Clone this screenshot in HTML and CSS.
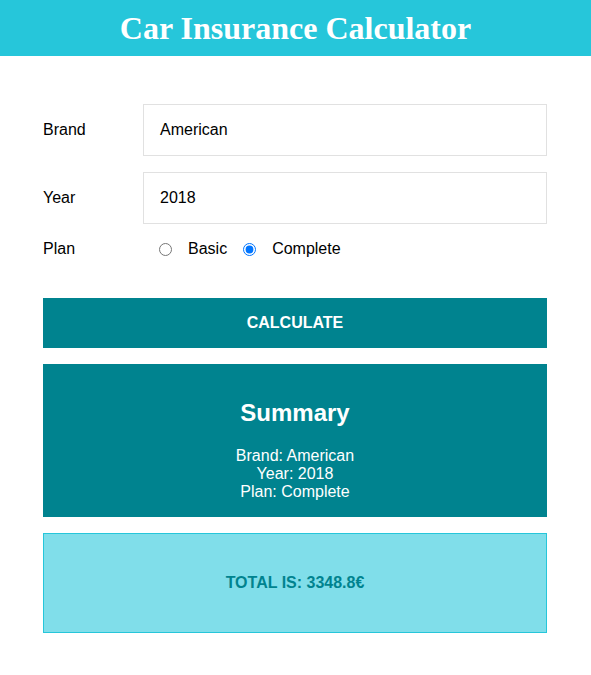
FILE: index.html
```html
<!DOCTYPE html>
<html>
<head>
<meta charset="utf-8">
<link rel="stylesheet" href="styles.css">
</head>
<body>
<header class="header"><h1 class="title">Car Insurance Calculator</h1></header>
<main class="container">
  <form class="form">
    <div class="row">
      <label class="label">Brand</label>
      <div class="field">American</div>
    </div>
    <div class="row">
      <label class="label">Year</label>
      <div class="field">2018</div>
    </div>
    <div class="row plan">
      <label class="label">Plan</label>
      <div class="radios">
        <input type="radio" name="plan" class="radio"> <span class="opt">Basic</span>
        <input type="radio" name="plan" class="radio" checked> <span class="opt">Complete</span>
      </div>
    </div>
    <button type="button" class="btn">CALCULATE</button>
  </form>
  <section class="summary">
    <h2 class="summary-title">Summary</h2>
    <ul class="summary-list">
      <li>Brand: American</li>
      <li>Year: 2018</li>
      <li>Plan: Complete</li>
    </ul>
  </section>
  <section class="result">
    <p class="total">TOTAL IS: 3348.8€</p>
  </section>
</main>
</body>
</html>
```
FILE: styles.css
```css
body {
  margin: 0;
  font-family: "Liberation Sans", Arial, sans-serif;
  font-size: 16px;
  color: #000;
  background: #fff;
}
.header {
  background: #26c6da;
  height: 56px;
  display: flex;
  align-items: center;
  justify-content: center;
}
.title {
  margin: 0;
  font-family: "Liberation Serif", "Times New Roman", serif;
  font-size: 32px;
  font-weight: bold;
  color: #fff;
  line-height: 1;
}
.container {
  width: 504px;
  margin: 48px 0 0 43px;
  display: flex;
  flex-direction: column;
  gap: 16px;
}
.form {
  display: flex;
  flex-direction: column;
  gap: 16px;
}
.row {
  display: flex;
  align-items: center;
}
.label {
  flex: 0 0 100px;
}
.field {
  flex: 1;
  height: 50px;
  border: 1px solid #e1e1e1;
  box-sizing: content-box;
  padding: 0 16px;
  display: flex;
  align-items: center;
}
.plan {
  margin-top: -7px;
  height: 32px;
}
.radios {
  display: flex;
  align-items: center;
  padding-left: 16px;
}
.radio {
  margin: 0 16px 0 0;
  width: 13px;
  height: 13px;
}
.opt {
  margin-right: 16px;
}
.btn {
  margin-top: 17px;
  height: 50px;
  background: #00838f;
  color: #fff;
  border: none;
  font-family: "Liberation Sans", Arial, sans-serif;
  font-size: 16px;
  font-weight: bold;
  width: 100%;
}
.summary {
  background: #00838f;
  color: #fff;
  text-align: center;
  padding: 35px 0 16px;
}
.summary-title {
  margin: 0 0 20px;
  font-size: 24px;
  line-height: 28px;
}
.summary-list {
  list-style: none;
  margin: 0;
  padding: 0;
  line-height: 18px;
}
.result {
  background: #80deea;
  border: 1px solid #26c6da;
  height: 98px;
  display: flex;
  align-items: center;
  justify-content: center;
}
.total {
  margin: 0;
  color: #00838f;
  font-weight: bold;
}
```
